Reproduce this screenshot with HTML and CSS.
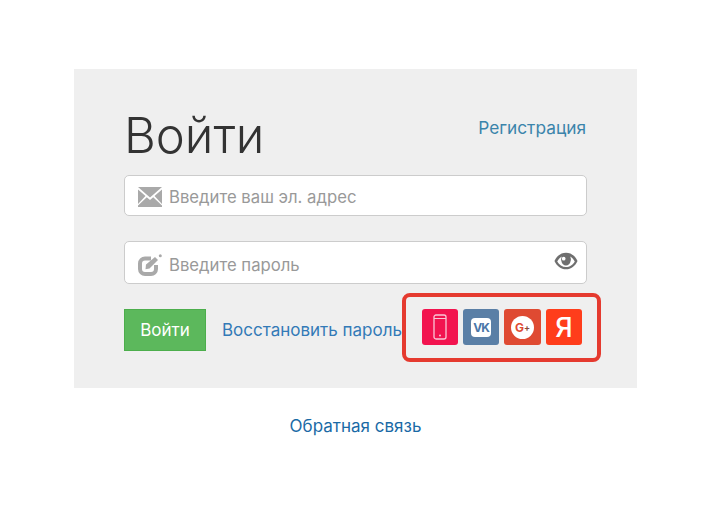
FILE: index.html
```html
<!DOCTYPE html>
<html lang="ru">
<head>
<meta charset="utf-8">
<title>Войти</title>
<link rel="stylesheet" href="styles.css">
</head>
<body>
<main class="page">
  <section class="panel">
    <header class="head">
      <h1 class="title">Войти</h1>
      <a class="register" href="#">Регистрация</a>
    </header>
    <div class="field field-email">
      <svg class="ficon ficon-mail" width="24" height="20" viewBox="0 0 24 20"><path fill="#a9a9a9" d="M0 0h24L12 10.500zM0 2.500v14.500l7.500-8zM24 2.500v14.500l-7.500-8zM0 20h24v-1.500l-8.800-8.300-3.200 2.800-3.200-2.800L0 18.500z"/></svg>
      <span class="ph">Введите ваш эл. адрес</span>
    </div>
    <div class="field field-pass">
      <svg class="ficon ficon-edit" width="24" height="22" viewBox="0 0 24 22"><path fill="none" stroke="#a9a9a9" stroke-width="4" d="M13 4.500H7a5 5 0 0 0-5 5v5.500a5 5 0 0 0 5 5h6a5 5 0 0 0 5-5v-4"/><path fill="#a9a9a9" d="M8 10.500 17 3l3 3-8.500 8.500-4 .8z"/><circle cx="22.300" cy="1.800" r="1.500" fill="#a9a9a9"/></svg>
      <span class="ph ph-pass">Введите пароль</span>
      <svg class="eye" width="24" height="18" viewBox="0 0 26 18"><path fill="#6f6f6f" fill-rule="evenodd" d="M13 0C7.500 0 3 3.500.5 9 3 14.500 7.500 18 13 18s10-3.500 12.500-9C23 3.500 18.500 0 13 0zM3.500 9.500C5 6.500 7 4.800 8.500 4a6.500 6.500 0 0 0-.5 5c.5 3 2.500 5 5 5s4.500-2 5-5a6.500 6.500 0 0 0-.5-5c1.500.8 3.500 2.500 5 5.500-2 3.500-5.500 6-9.500 6s-7.500-2.500-9.500-6z"/><circle cx="10.500" cy="6.500" r="2" fill="#fff"/></svg>
    </div>
    <div class="actions">
      <button class="btn" type="button">Войти</button>
      <a class="restore" href="#">Восстановить пароль</a>
      <div class="social">
        <a class="soc soc-phone" href="#"><svg width="14" height="26" viewBox="0 0 14 26"><rect x="1" y="1" width="12" height="24" rx="2" fill="none" stroke="#f9c6d6" stroke-width="1.300"/><path d="M1 4.500h12" stroke="#f9c6d6" stroke-width="1"/><circle cx="7" cy="21.500" r="1" fill="#f9c6d6"/></svg></a>
        <a class="soc soc-vk" href="#"><span class="vk-badge">VK</span></a>
        <a class="soc soc-g" href="#"><span class="g-badge"><span class="g-letter">G</span><span class="g-plus">+</span></span></a>
        <a class="soc soc-ya" href="#">Я</a>
      </div>
    </div>
  </section>
  <a class="feedback" href="#">Обратная связь</a>
</main>
</body>
</html>
```
FILE: styles.css
```css
* { box-sizing: border-box; }
html, body { margin: 0; padding: 0; }
body { background: #fff; font-family: Inter, "Noto Sans", sans-serif; color: #333; }
a { text-decoration: none; }
.page { display: flex; flex-direction: column; align-items: center; padding-top: 69px; width: 711px; }
.panel { width: 563px; height: 319px; background: #efefef; padding: 27px 50px 0; }
.head { display: flex; justify-content: space-between; align-items: center; height: 79px; }
.title { margin: 0; font-size: 49px; font-weight: 300; line-height: 77px; color: #333; }
.register { font-size: 17.300px; color: #3b84ab; margin-right: 1px; position: relative; top: -8px; }
.field { display: flex; align-items: center; width: 463px; background: #fff; border: 1px solid #ccc; border-radius: 5px; padding-left: 13px; }
.field-email { height: 41px; margin-bottom: 25px; }
.field-pass { height: 43px; margin-bottom: 25px; }
.ficon { flex: none; margin-right: 7px; }
.ficon-mail { margin-top: 3px; }
.ficon-edit { margin-top: 5px; }
.ph { font-size: 16.700px; color: #999; padding-top: 2px; }
.ph-pass { padding-top: 4px; }
.eye { margin-left: auto; margin-right: 8px; margin-bottom: 4px; }
.actions { display: flex; align-items: flex-start; position: relative; }
.btn { width: 82px; height: 42px; background: #5cb85c; border: 1px solid #4cae4c; color: #fff; font: 17px Inter, "Noto Sans", sans-serif; padding: 0; }
.restore { font-size: 17px; color: #337ab7; margin-left: 16px; line-height: 42px; white-space: nowrap; }
.social { position: absolute; left: 278px; top: -16px; width: 199px; height: 69px; border: 4px solid #e53a2f; border-radius: 8px; display: flex; gap: 5px; padding: 12px 0 0 16px; }
.soc { width: 36px; height: 36px; border-radius: 3px; display: flex; align-items: center; justify-content: center; }
.soc-phone { background: #f2134f; }
.soc-vk { background: #5a7fa6; }
.soc-g { background: #df4a32; width: 37px; }
.soc-ya { background: #ff3d1b; color: #fff; font-size: 27px; font-weight: 500; }
.vk-badge { width: 20px; height: 19px; border-radius: 4px; background: #fff; color: #4a76a8; font-size: 12px; font-weight: 700; letter-spacing: -1px; display: flex; align-items: center; justify-content: center; }
.g-badge { width: 23px; height: 23px; border-radius: 50%; background: #fff; display: flex; align-items: center; justify-content: center; font-weight: 700; }
.g-letter { color: #df4a32; font-size: 12px; }
.g-plus { color: #8a4a3a; font-size: 9px; }
.feedback { margin-top: 28px; font-size: 17px; color: #1a6aa6; }
```
